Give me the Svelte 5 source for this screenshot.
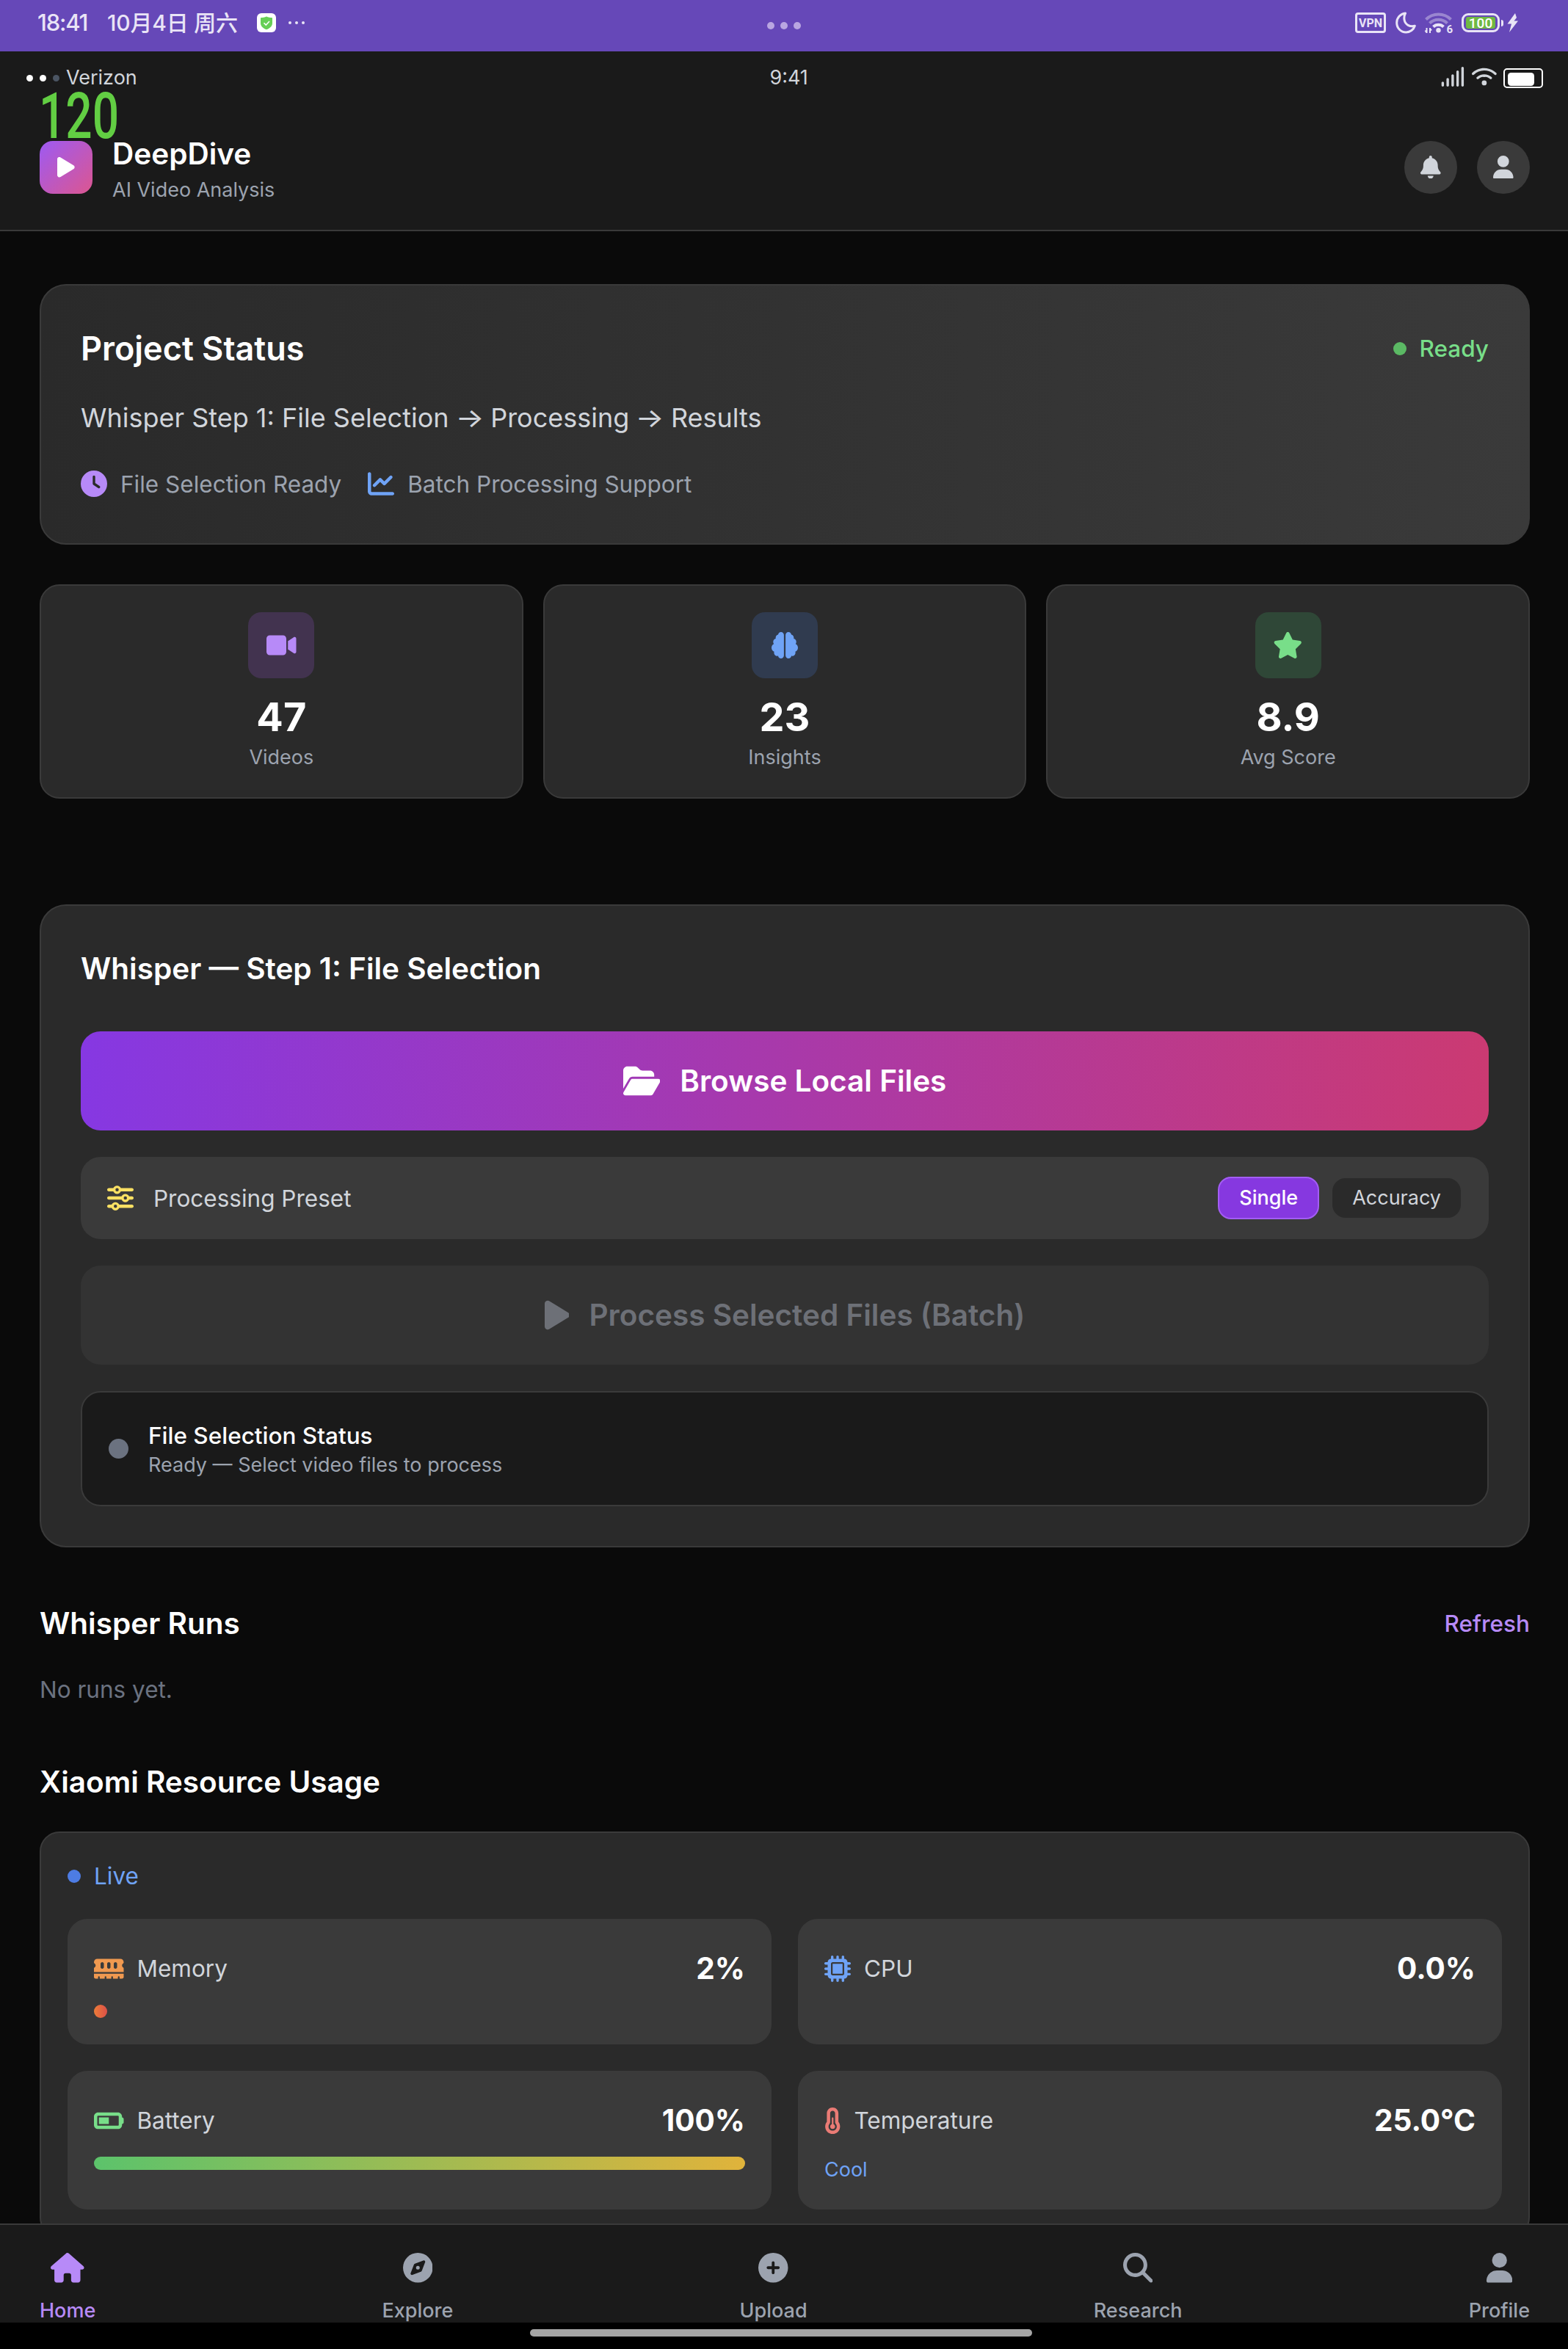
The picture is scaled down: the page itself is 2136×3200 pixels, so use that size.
<script>
  // Icon glyphs: [viewBox width, path]; every glyph is 512 units tall.
  const icons = {
    play: [384, 'M73 39c-14.8-9.1-33.4-9.4-48.5-.9S0 62.6 0 80V432c0 17.4 9.4 33.4 24.5 41.9s33.7 8.1 48.5-.9L361 297c14.3-8.7 23-24.2 23-41s-8.7-32.2-23-41L73 39z'],
    bell: [448, 'M224 0c-17.7 0-32 14.3-32 32V51.2C119 66 64 130.6 64 208v18.8c0 47-17.3 92.4-48.5 127.6l-7.4 8.3c-8.4 9.4-10.4 22.9-5.3 34.4S19.4 416 32 416H416c12.6 0 24-7.4 29.2-18.9s3.1-25-5.3-34.4l-7.4-8.3C401.3 319.2 384 273.9 384 226.8V208c0-77.4-55-142-128-156.8V32c0-17.7-14.3-32-32-32zm45.3 493.3c12-12 18.7-28.3 18.7-45.3H224 160c0 17 6.7 33.3 18.7 45.3s28.3 18.7 45.3 18.7s33.3-6.7 45.3-18.7z'],
    user: [448, 'M224 256A128 128 0 1 0 224 0a128 128 0 1 0 0 256zm-45.7 48C79.8 304 0 383.8 0 482.3C0 498.7 13.3 512 29.7 512H418.3c16.4 0 29.7-13.3 29.7-29.7C448 383.8 368.2 304 269.7 304H178.3z'],
    clock: [512, 'M256 0a256 256 0 1 1 0 512A256 256 0 1 1 256 0zM232 120V256c0 8 4 15.5 10.7 20l96 64c11 7.4 25.9 4.4 33.3-6.7s4.4-25.9-6.7-33.3L280 243.2V120c0-13.3-10.7-24-24-24s-24 10.7-24 24z'],
    chart: [512, 'M64 64c0-17.7-14.3-32-32-32S0 46.3 0 64V400c0 44.2 35.8 80 80 80H480c17.7 0 32-14.3 32-32s-14.3-32-32-32H80c-8.8 0-16-7.2-16-16V64zm406.6 86.6c12.5-12.5 12.5-32.8 0-45.3s-32.8-12.5-45.3 0L320 210.7l-57.4-57.4c-12.5-12.5-32.8-12.5-45.3 0l-112 112c-12.5 12.5-12.5 32.8 0 45.3s32.8 12.5 45.3 0L240 221.3l57.4 57.4c12.5 12.5 32.8 12.5 45.3 0l128-128z'],
    video: [576, 'M0 128C0 92.7 28.7 64 64 64H320c35.3 0 64 28.7 64 64V384c0 35.3-28.7 64-64 64H64c-35.3 0-64-28.7-64-64V128zM559.1 99.8c10.4 5.6 16.9 16.4 16.9 28.2V384c0 11.8-6.5 22.6-16.9 28.2s-23 5-32.9-1.6l-96-64L416 337.1V320 192 174.9l14.2-9.5 96-64c9.8-6.5 22.4-7.2 32.9-1.6z'],
    brain: [512, 'M184 0c30.9 0 56 25.1 56 56V456c0 30.9-25.1 56-56 56c-28.9 0-52.7-21.9-55.7-50.1c-5.2 1.4-10.7 2.1-16.3 2.1c-35.3 0-64-28.7-64-64c0-7.4 1.3-14.6 3.6-21.2C21.4 367.4 0 338.2 0 304c0-31.9 18.7-59.5 45.8-72.3C37.1 220.8 32 207 32 192c0-30.7 21.6-56.3 50.4-62.6C80.8 123.9 80 118 80 112c0-29.9 20.6-55.1 48.3-62.1C131.3 21.9 155.1 0 184 0zM328 0c28.9 0 52.6 21.9 55.7 49.9c27.8 7 48.3 32.1 48.3 62.1c0 6-.8 11.9-2.4 17.4c28.8 6.2 50.4 31.9 50.4 62.6c0 15-5.1 28.8-13.8 39.7C493.3 244.5 512 272.1 512 304c0 34.2-21.4 63.4-51.6 74.8c2.3 6.6 3.6 13.8 3.6 21.2c0 35.3-28.7 64-64 64c-5.6 0-11.1-.7-16.3-2.1c-3 28.2-26.8 50.1-55.7 50.1c-30.9 0-56-25.1-56-56V56c0-30.9 25.1-56 56-56z'],
    star: [576, 'M316.9 18C311.6 7 300.4 0 288.1 0s-23.4 7-28.8 18L195 150.3 51.4 171.5c-12 1.8-22 10.2-25.7 21.7s-.7 24.2 7.9 32.7L137.8 329 113.2 474.7c-2 12 3 24.2 12.9 31.3s23 8 33.8 2.3l128.3-68.5 128.3 68.5c10.8 5.7 23.9 4.9 33.8-2.3s14.9-19.3 12.9-31.3L438.5 329 542.7 225.9c8.6-8.5 11.7-21.2 7.9-32.7s-13.7-19.9-25.7-21.7L381.2 150.3 316.9 18z'],
    folder: [576, 'M88.7 223.8L0 375.8V96C0 60.7 28.7 32 64 32H181.5c17 0 33.3 6.7 45.3 18.7l26.5 26.5c12 12 28.3 18.7 45.3 18.7H416c35.3 0 64 28.7 64 64v32H144c-22.8 0-43.8 12.1-55.3 31.8zm27.6 16.1C122.1 230 132.6 224 144 224H544c11.5 0 22 6.1 27.7 16.1s5.7 22.2-.1 32.1l-112 192C453.9 474 443.4 480 432 480H32c-11.5 0-22-6.1-27.7-16.1s-5.7-22.2 .1-32.1l112-192z'],
    sliders: [512, 'M0 416c0 17.7 14.3 32 32 32l54.7 0c12.3 28.3 40.5 48 73.3 48s61-19.7 73.3-48L480 448c17.7 0 32-14.3 32-32s-14.3-32-32-32l-246.7 0c-12.3-28.3-40.5-48-73.3-48s-61 19.7-73.3 48L32 384c-17.7 0-32 14.3-32 32zm128 0a32 32 0 1 1 64 0 32 32 0 1 1 -64 0zM320 256a32 32 0 1 1 64 0 32 32 0 1 1 -64 0zm32-80c-32.8 0-61 19.7-73.3 48L32 224c-17.7 0-32 14.3-32 32s14.3 32 32 32l246.7 0c12.3 28.3 40.5 48 73.3 48s61-19.7 73.3-48l54.7 0c17.7 0 32-14.3 32-32s-14.3-32-32-32l-54.7 0c-12.3-28.3-40.5-48-73.3-48zM192 128a32 32 0 1 1 0-64 32 32 0 1 1 0 64zm73.3-64C253 35.7 224.8 16 192 16s-61 19.7-73.3 48L32 64C14.3 64 0 78.3 0 96s14.3 32 32 32l86.7 0c12.3 28.3 40.5 48 73.3 48s61-19.7 73.3-48L480 128c17.7 0 32-14.3 32-32s-14.3-32-32-32L265.3 64z'],
    memory: [576, 'M64 64C28.7 64 0 92.7 0 128v7.4c0 6.8 4.4 12.6 10.1 16.3C23.3 160.3 32 175.1 32 192s-8.7 31.7-21.9 40.3C4.4 236 0 241.8 0 248.6V320H576V248.6c0-6.8-4.4-12.6-10.1-16.3C552.7 223.7 544 208.9 544 192s8.7-31.7 21.9-40.3c5.7-3.7 10.1-9.5 10.1-16.3V128c0-35.3-28.7-64-64-64H64zM576 352H0v64c0 17.7 14.3 32 32 32H80V416c0-8.8 7.2-16 16-16s16 7.2 16 16v32h96V416c0-8.8 7.2-16 16-16s16 7.2 16 16v32h96V416c0-8.8 7.2-16 16-16s16 7.2 16 16v32h96V416c0-8.8 7.2-16 16-16s16 7.2 16 16v32h48c17.7 0 32-14.3 32-32V352zM192 160v64c0 17.7-14.3 32-32 32s-32-14.3-32-32V160c0-17.7 14.3-32 32-32s32 14.3 32 32zm128 0v64c0 17.7-14.3 32-32 32s-32-14.3-32-32V160c0-17.7 14.3-32 32-32s32 14.3 32 32zm128 0v64c0 17.7-14.3 32-32 32s-32-14.3-32-32V160c0-17.7 14.3-32 32-32s32 14.3 32 32z'],
    chip: [512, 'M176 24c0-13.3-10.7-24-24-24s-24 10.7-24 24V64c-35.3 0-64 28.7-64 64H24c-13.3 0-24 10.7-24 24s10.7 24 24 24H64v56H24c-13.3 0-24 10.7-24 24s10.7 24 24 24H64v56H24c-13.3 0-24 10.7-24 24s10.7 24 24 24H64c0 35.3 28.7 64 64 64v40c0 13.3 10.7 24 24 24s24-10.7 24-24V448h56v40c0 13.3 10.7 24 24 24s24-10.7 24-24V448h56v40c0 13.3 10.7 24 24 24s24-10.7 24-24V448c35.3 0 64-28.7 64-64h40c13.3 0 24-10.7 24-24s-10.7-24-24-24H448V280h40c13.3 0 24-10.7 24-24s-10.7-24-24-24H448V176h40c13.3 0 24-10.7 24-24s-10.7-24-24-24H448c0-35.3-28.7-64-64-64V24c0-13.3-10.7-24-24-24s-24 10.7-24 24V64H280V24c0-13.3-10.7-24-24-24s-24 10.7-24 24V64H176V24zM160 128H352c17.7 0 32 14.3 32 32V352c0 17.7-14.3 32-32 32H160c-17.7 0-32-14.3-32-32V160c0-17.7 14.3-32 32-32zm192 32H160V352H352V160z'],
    battery: [576, 'M464 160c8.8 0 16 7.2 16 16V336c0 8.8-7.2 16-16 16H80c-8.8 0-16-7.2-16-16V176c0-8.8 7.2-16 16-16H464zM80 96C35.8 96 0 131.8 0 176V336c0 44.2 35.8 80 80 80H464c44.2 0 80-35.8 80-80V320c17.7 0 32-14.3 32-32V224c0-17.7-14.3-32-32-32V176c0-44.2-35.8-80-80-80H80zm208 96H96V320H288V192z'],
    thermo: [320, 'M160 64c-26.5 0-48 21.5-48 48V276.5c0 17.3-7.1 31.9-15.3 42.5C86.2 332.6 80 349.5 80 368c0 44.2 35.8 80 80 80s80-35.8 80-80c0-18.5-6.2-35.4-16.7-48.9c-8.2-10.6-15.3-25.2-15.3-42.5V112c0-26.5-21.5-48-48-48zM48 112C48 50.2 98.1 0 160 0s112 50.1 112 112V276.5c0 .1 .1 .3 .2 .6c.2 .6 .8 1.6 1.7 2.8c18.9 24.4 30.1 55 30.1 88.1c0 79.5-64.5 144-144 144S16 447.5 16 368c0-33.2 11.2-63.8 30.1-88.1c.9-1.2 1.5-2.2 1.7-2.8c.1-.3 .2-.5 .2-.6V112zM208 368c0 26.5-21.5 48-48 48s-48-21.5-48-48c0-20.9 13.4-38.7 32-45.3V208c0-8.8 7.2-16 16-16s16 7.2 16 16V322.7c18.6 6.6 32 24.4 32 45.3z'],
    house: [576, 'M575.8 255.5c0 18-15 32.1-32 32.1h-32l.7 160.2c0 2.7-.2 5.4-.5 8.1V472c0 22.1-17.9 40-40 40H456c-1.1 0-2.2 0-3.3-.1c-1.4 .1-2.8 .1-4.2 .1H416 392c-22.1 0-40-17.9-40-40V448 384c0-17.7-14.3-32-32-32H256c-17.7 0-32 14.3-32 32v64 24c0 22.1-17.9 40-40 40H160 128.1c-1.5 0-3-.1-4.5-.2c-1.2 .1-2.4 .2-3.6 .2H104c-22.1 0-40-17.9-40-40V360c0-.9 0-1.9 .1-2.8V287.6H32c-18 0-32-14-32-32.1c0-9 3-17 10-24L266.4 8c7-7 15-8 22-8s15 2 21 7L564.8 231.5c8 7 12 15 11 24z'],
    compass: [512, 'M256 512A256 256 0 1 0 256 0a256 256 0 1 0 0 512zm50.7-186.9L162.4 380.6c-19.4 7.5-38.5-11.6-31-31l55.5-144.3c3.3-8.5 9.9-15.1 18.4-18.4l144.3-55.5c19.4-7.5 38.5 11.6 31 31L325.1 306.7c-3.2 8.5-9.9 15.1-18.4 18.4zM288 256a32 32 0 1 0 -64 0 32 32 0 1 0 64 0z'],
    plus: [512, 'M256 512A256 256 0 1 0 256 0a256 256 0 1 0 0 512zM232 344V280H168c-13.3 0-24-10.7-24-24s10.7-24 24-24h64V168c0-13.3 10.7-24 24-24s24 10.7 24 24v64h64c13.3 0 24 10.7 24 24s-10.7 24-24 24H280v64c0 13.3-10.7 24-24 24s-24-10.7-24-24z'],
    search: [512, 'M416 208c0 45.9-14.9 88.3-40 122.7L502.6 457.4c12.5 12.5 12.5 32.8 0 45.3s-32.8 12.5-45.3 0L330.7 376c-34.4 25.2-76.8 40-122.7 40C93.1 416 0 322.9 0 208S93.1 0 208 0S416 93.1 416 208zM208 352a144 144 0 1 0 0-288 144 144 0 1 0 0 288z'],
    wifi: [640, 'M54.2 202.9C123.2 136.7 216.8 96 320 96s196.8 40.7 265.8 106.9c12.8 12.2 33 11.8 45.2-.9s11.8-33-.9-45.2C549.7 79.5 440.4 32 320 32S90.3 79.5 9.8 156.7C-2.9 169-3.3 189.2 8.9 202s32.5 13.2 45.2 .9zM320 256c56.8 0 108.6 21.1 148.2 56c13.3 11.7 33.5 10.4 45.2-2.8s10.4-33.5-2.8-45.2C459.8 219.2 393 192 320 192s-139.8 27.2-190.5 72c-13.3 11.7-14.5 31.9-2.8 45.2s31.9 14.5 45.2 2.8c39.5-34.9 91.3-56 148.2-56zm64 160a64 64 0 1 0 -128 0 64 64 0 1 0 128 0z'],
    signal: [640, 'M576 0c17.7 0 32 14.3 32 32V480c0 17.7-14.3 32-32 32s-32-14.3-32-32V32c0-17.7 14.3-32 32-32zM448 96c17.7 0 32 14.3 32 32V480c0 17.7-14.3 32-32 32s-32-14.3-32-32V128c0-17.7 14.3-32 32-32zM352 224V480c0 17.7-14.3 32-32 32s-32-14.3-32-32V224c0-17.7 14.3-32 32-32s32 14.3 32 32zM192 288c17.7 0 32 14.3 32 32V480c0 17.7-14.3 32-32 32s-32-14.3-32-32V320c0-17.7 14.3-32 32-32zM96 416v64c0 17.7-14.3 32-32 32s-32-14.3-32-32V416c0-17.7 14.3-32 32-32s32 14.3 32 32z']
  };

  const stats = [
    { icon: 'video', tone: 'purple', value: '47', label: 'Videos' },
    { icon: 'brain', tone: 'blue', value: '23', label: 'Insights' },
    { icon: 'star', tone: 'green', value: '8.9', label: 'Avg Score' }
  ];

  const resources = [
    { icon: 'memory', tone: 'orange', label: 'Memory', value: '2%', bar: 2, fill: 'warm' },
    { icon: 'chip', tone: 'blue', label: 'CPU', value: '0.0%' },
    { icon: 'battery', tone: 'green', label: 'Battery', value: '100%', bar: 100, fill: 'charge' },
    { icon: 'thermo', tone: 'red', label: 'Temperature', value: '25.0°C', note: 'Cool' }
  ];

  const tabs = [
    { icon: 'house', label: 'Home' },
    { icon: 'compass', label: 'Explore' },
    { icon: 'plus', label: 'Upload' },
    { icon: 'search', label: 'Research' },
    { icon: 'user', label: 'Profile' }
  ];

  let active = $state('Home');
</script>

{#snippet icon(name)}
  <svg class="icon" viewBox="0 0 {icons[name][0]} 512" aria-hidden="true"><path fill-rule="evenodd" d={icons[name][1]} /></svg>
{/snippet}

<div class="screen">
  <div class="system">
    <div class="sys-left">
      <span class="sys-time">18:41</span>
      <span class="sys-date">10月4日 周六</span>
      <svg class="guard" viewBox="0 0 26 26" aria-hidden="true">
        <rect width="26" height="26" rx="6" fill="#fff" />
        <path d="M13 4.500c2.500 1.300 5 1.600 8 1.700v7.300c0 4.600-4 7.400-8 8.800-4-1.400-8-4.200-8-8.800V6.200c3-.1 5.500-.4 8-1.700z" fill="#67cf57" />
        <path d="M9.500 13.200l2.800 2.900 4.700-5.200" fill="none" stroke="#fff" stroke-width="1.500" />
      </svg>
      <span class="more"><i></i><i></i><i></i></span>
    </div>
    <div class="sys-mid"><i></i><i></i><i></i></div>
    <div class="sys-right">
      <span class="vpn">VPN</span>
      <svg class="moon" viewBox="0 0 28 30" aria-hidden="true"><path d="M13.500 2C6.500 2.800 1.700 8.400 1.700 15c0 7.300 5.700 13 12.700 13 5.500 0 10.300-3.600 11.900-8.700-6.700 1.900-13-1.800-14.200-8.100-.6-3.200 0-6.500 1.400-9.200z" fill="none" stroke="#e9e4f6" stroke-width="3" stroke-linejoin="round" /></svg>
      <div class="net">
        <svg viewBox="0 0 39 30" aria-hidden="true">
          <g fill="none" stroke="#e9e4f6" stroke-width="4">
            <path d="M2.500 10.500a24 24 0 0 1 34 0" opacity=".4" />
            <path d="M7.500 15.700a17 17 0 0 1 24 0" opacity=".4" />
            <path d="M12.500 20.500a10 10 0 0 1 14 0" />
          </g>
          <circle cx="19.500" cy="25.300" r="3.200" fill="#e9e4f6" />
          <path d="M3.500 22v7M3.500 28.500l-2-3M8 29v-7M8 22.500l2 3" fill="none" stroke="#e9e4f6" stroke-width="2" />
        </svg>
        <span class="gen">6</span>
      </div>
      <div class="charge-group">
        <span class="cell"><span class="level">100</span></span><i class="tip"></i>
      </div>
      <svg class="bolt" viewBox="0 0 15 26" aria-hidden="true"><path d="M11 0L0.500 14.500h5.500L3 26 15 10.500H9.500L13 6z" fill="#e9e4f6" /></svg>
    </div>
  </div>

  <div class="app">
    <header class="header">
      <div class="carrier">
        <div class="carrier-left"><i></i><i></i><i class="off"></i><span>Verizon</span></div>
        <span>9:41</span>
        <div class="carrier-right">
          <span class="glyph">{@render icon('signal')}</span>
          <span class="glyph">{@render icon('wifi')}</span>
          <span class="phone-battery"><i></i></span>
        </div>
      </div>
      <div class="brand-row">
        <div class="brand">
          <div class="logo">{@render icon('play')}</div>
          <div>
            <h1>DeepDive</h1>
            <p>AI Video Analysis</p>
          </div>
        </div>
        <div class="actions">
          <button aria-label="Notifications">{@render icon('bell')}</button>
          <button aria-label="Account">{@render icon('user')}</button>
        </div>
      </div>
      <span class="fps">120</span>
    </header>

    <main>
      <section class="status-card">
        <div class="between">
          <h2>Project Status</h2>
          <div class="ready"><i></i>Ready</div>
        </div>
        <p class="steps">Whisper Step 1: File Selection <span class="arrow">→</span> Processing <span class="arrow">→</span> Results</p>
        <div class="features">
          <div><span class="ic purple">{@render icon('clock')}</span>File Selection Ready</div>
          <div><span class="ic blue">{@render icon('chart')}</span>Batch Processing Support</div>
        </div>
      </section>

      <section class="stats">
        {#each stats as s}
          <div class="stat">
            <div class="badge {s.tone}">{@render icon(s.icon)}</div>
            <div class="stat-value">{s.value}</div>
            <div class="stat-label">{s.label}</div>
          </div>
        {/each}
      </section>

      <section class="whisper">
        <h3>Whisper — Step 1: File Selection</h3>
        <div class="stack">
          <button class="browse">{@render icon('folder')}<span>Browse Local Files</span></button>
          <div class="preset">
            <div class="preset-name"><span class="ic yellow">{@render icon('sliders')}</span>Processing Preset</div>
            <div class="chips">
              <button class="chip on">Single</button>
              <button class="chip">Accuracy</button>
            </div>
          </div>
          <button class="process" disabled>{@render icon('play')}<span>Process Selected Files (Batch)</span></button>
          <div class="file-status">
            <i></i>
            <div>
              <p class="fs-title">File Selection Status</p>
              <p class="fs-note">Ready — Select video files to process</p>
            </div>
          </div>
        </div>
      </section>

      <section class="runs">
        <div class="between">
          <h3>Whisper Runs</h3>
          <button class="link">Refresh</button>
        </div>
        <p>No runs yet.</p>
      </section>

      <section class="usage">
        <h3>Xiaomi Resource Usage</h3>
        <div class="usage-card">
          <div class="live"><i></i>Live</div>
          <div class="tiles">
            {#each resources as r}
              <div class="tile">
                <div class="between">
                  <div class="tile-name"><span class="ic {r.tone}">{@render icon(r.icon)}</span>{r.label}</div>
                  <strong>{r.value}</strong>
                </div>
                {#if r.bar}
                  <div class="track"><div class="fill {r.fill}" style="width: {r.bar}%"></div></div>
                {/if}
                {#if r.note}<div class="note">{r.note}</div>{/if}
              </div>
            {/each}
          </div>
        </div>
      </section>
    </main>

    <nav>
      {#each tabs as t}
        <button class="tab" class:active={active === t.label} onclick={() => (active = t.label)}>
          <span class="tab-icon">{@render icon(t.icon)}</span>
          <span>{t.label}</span>
        </button>
      {/each}
    </nav>
  </div>

  <div class="gesture"><i></i></div>
</div>

<style>
  :global(html) { font-size: 36px; }
  :global(body) { background: #000; overflow: hidden; }

  .screen {
    width: 2136px;
    height: 3200px;
    display: flex;
    flex-direction: column;
    overflow: hidden;
    font-family: Inter, 'Noto Sans CJK SC', sans-serif;
    color: #fff;
  }
  h1, h2, h3, p { margin: 0; }
  button { font: inherit; color: inherit; border: 0; padding: 0; background: none; }
  i { display: block; flex: none; }
  .icon { display: block; flex: none; height: 1em; width: auto; fill: currentColor; }
  .between { display: flex; align-items: center; justify-content: space-between; }
  .ic { font-size: 36px; }

  .purple { color: #b78af8; }
  .blue { color: #6fa3f6; }
  .green { color: #78de89; }
  .yellow { color: #fae063; }
  .orange { color: #f09950; }
  .red { color: #ea7b75; }

  /* System status bar */
  .system {
    flex: none;
    height: 70px;
    background: #6648b8;
    color: #e9e4f6;
    display: grid;
    grid-template-columns: 1fr auto 1fr;
    padding: 0 68px 0 51px;
  }
  .sys-left, .sys-right { display: flex; align-items: center; height: 62px; }
  .sys-left { font-size: 31px; font-weight: 500; line-height: 62px; white-space: nowrap; }
  .sys-time { width: 95px; letter-spacing: -1.2px; }
  .sys-date { width: 204px; font-size: 30px; letter-spacing: -0.2px; }
  .guard { width: 26px; height: 26px; }
  .more { display: flex; gap: 5px; margin-left: 17px; }
  .more i { width: 4px; height: 4px; border-radius: 50%; background: #e9e4f6; }
  .sys-mid { display: flex; gap: 8px; height: 70px; align-items: center; transform: translateX(8px); }
  .sys-mid i { width: 10px; height: 10px; border-radius: 50%; background: #b9a6e1; }
  .sys-right { justify-content: flex-end; }
  .vpn {
    box-sizing: border-box;
    width: 42px;
    height: 28px;
    border: 3px solid #e9e4f6;
    border-radius: 4px;
    font-family: Roboto, sans-serif;
    font-size: 16px;
    font-weight: 700;
    line-height: 23px;
    text-align: center;
  }
  .moon { width: 28px; height: 30px; margin-left: 13px; }
  .net { position: relative; width: 39px; height: 30px; margin-left: 11px; }
  .net svg { display: block; width: 39px; height: 30px; }
  .gen { position: absolute; right: 0; bottom: -2px; font-family: Roboto, sans-serif; font-size: 15px; font-weight: 700; line-height: 16px; }
  .charge-group { display: flex; align-items: center; margin-left: 12px; }
  .cell {
    box-sizing: border-box;
    width: 52px;
    height: 26px;
    padding: 2px 3px;
    border: 3px solid #e9e4f6;
    border-radius: 9px;
    display: flex;
  }
  .level {
    flex: 1;
    border-radius: 3px;
    background: #70b943;
    color: #fff;
    font-family: Roboto, sans-serif;
    font-size: 19px;
    font-weight: 500;
    line-height: 17px;
    text-align: center;
  }
  .tip { width: 3px; height: 9px; margin-left: 2px; border-radius: 0 3px 3px 0; background: #e9e4f6; }
  .bolt { width: 15px; height: 26px; margin-left: 5px; }

  /* App frame */
  .app {
    width: 2138px;
    flex: 1;
    min-height: 0;
    display: flex;
    flex-direction: column;
    overflow: hidden;
    background: #0a0a0a;
  }
  .header { position: relative; flex: none; background: #1a1a1a; border-bottom: 2px solid #3a3a3a; }
  .carrier {
    height: 2rem;
    padding: 0 1rem;
    display: flex;
    align-items: center;
    justify-content: space-between;
    font-size: 0.75rem;
    line-height: 1rem;
    color: #d1d5db;
  }
  .carrier-left, .carrier-right { display: flex; align-items: center; gap: 9px; }
  .carrier-left i { width: 9px; height: 9px; border-radius: 50%; background: #fff; }
  .carrier-left i.off { background: #4b5563; }
  .glyph { margin-bottom: 3px; }
  .phone-battery { box-sizing: border-box; width: 54px; height: 27px; border: 2px solid #fff; border-radius: 5px; padding: 4.5px; }
  .phone-battery i { width: 36px; height: 18px; border-radius: 4.5px; background: #fff; }

  .brand-row { display: flex; align-items: center; justify-content: space-between; padding: 1rem 1.5rem; }
  .brand { display: flex; align-items: center; gap: 0.75rem; }
  .logo {
    width: 2rem;
    height: 2rem;
    border-radius: 0.5rem;
    display: grid;
    place-items: center;
    font-size: 0.875rem;
    background: linear-gradient(135deg, #9d5af3, #dc5690);
  }
  h1 { font-size: 1.125rem; line-height: 1.75rem; font-weight: 600; }
  .brand p { font-size: 0.75rem; line-height: 1rem; color: #9ca3af; }
  .actions { display: flex; gap: 0.75rem; }
  .actions button {
    width: 2rem;
    height: 2rem;
    border-radius: 50%;
    display: grid;
    place-items: center;
    background: #3a3a3a;
    color: #d1d5db;
    font-size: 0.875rem;
  }
  /* Frame-rate counter floating over the header */
  .fps {
    position: absolute;
    left: 53px;
    top: 57px;
    font-family: Roboto, sans-serif;
    font-size: 87px;
    font-weight: 500;
    line-height: 62px;
    color: #62ce43;
    transform: scaleX(0.735);
    transform-origin: left;
  }

  /* Content */
  main { flex: 1; min-height: 0; overflow: hidden; padding: 2rem 1.5rem 0; }
  .status-card {
    padding: 1.5rem;
    border: 2px solid #3a3a3a;
    border-radius: 1rem;
    background: linear-gradient(90deg, #2a2a2a, #3a3a3a) border-box;
  }
  h2 { font-size: 1.25rem; line-height: 1.75rem; font-weight: 600; }
  h3 { font-size: 1.125rem; line-height: 1.75rem; font-weight: 600; }
  .ready { display: flex; align-items: center; gap: 0.5rem; font-size: 0.875rem; line-height: 1.25rem; font-weight: 500; color: #78de89; }
  .ready i { width: 18px; height: 18px; border-radius: 50%; background: #5bb964; }
  .steps { margin-top: 1rem; font-size: 1rem; line-height: 1.5rem; color: #d1d5db; }
  .arrow { display: inline-block; margin: 0 1px; line-height: 1; transform: scaleX(1.14); }
  .features { display: flex; gap: 1rem; height: 1.5rem; margin-top: 1rem; font-size: 0.875rem; color: #9ca3af; }
  .features div { display: flex; align-items: center; gap: 0.5rem; }

  .stats { display: grid; grid-template-columns: repeat(3, 1fr); gap: 0.75rem; margin-top: 1.5rem; }
  .stat {
    display: flex;
    flex-direction: column;
    align-items: center;
    padding: 1rem;
    border: 2px solid #3a3a3a;
    border-radius: 0.75rem;
    background: #2a2a2a;
  }
  .badge { width: 2.5rem; height: 2.5rem; border-radius: 0.5rem; display: grid; place-items: center; font-size: 1rem; }
  .badge.purple { background: #42334f; }
  .badge.blue { background: #303b4f; }
  .badge.green { background: #2f4737; }
  .stat-value { margin: 18px 0 3px; font-size: 1.5rem; line-height: 69px; font-weight: 700; }
  .stat-label { font-size: 0.75rem; line-height: 1rem; color: #9ca3af; }

  .whisper {
    margin-top: 4rem;
    padding: 1.5rem;
    border: 2px solid #3a3a3a;
    border-radius: 1rem;
    background: #2a2a2a;
  }
  .stack { display: flex; flex-direction: column; gap: 1rem; margin-top: 1.5rem; }
  .browse, .process {
    height: 3.75rem;
    display: flex;
    align-items: center;
    justify-content: center;
    gap: 0.75rem;
    border-radius: 0.75rem;
    font-size: 1.125rem;
    font-weight: 600;
  }
  .browse { background: linear-gradient(90deg, #8638e2, #cb3a72); }
  .process { background: #333; color: #6d7077; }
  .browse .icon, .process .icon { font-size: 1.25rem; }
  .preset {
    display: flex;
    align-items: center;
    justify-content: space-between;
    padding: 0.75rem 38px 0.75rem 1rem;
    border-radius: 0.75rem;
    background: #3a3a3a;
  }
  .preset-name { display: flex; align-items: center; gap: 0.75rem; font-size: 0.875rem; color: #d1d5db; }
  .chips { display: flex; align-items: center; gap: 0.5rem; font-size: 0.75rem; line-height: 1rem; }
  .chip { padding: 0.25rem 0.75rem; border-radius: 0.5rem; background: #2a2a2a; color: #d1d5db; }
  .chip.on { border: 2px solid #a35df4; background: #8638e0; color: #fff; font-weight: 500; }
  .file-status {
    display: flex;
    align-items: center;
    gap: 0.75rem;
    padding: 1rem;
    border: 2px solid #3a3a3a;
    border-radius: 0.75rem;
    background: #1a1a1a;
  }
  .file-status i { width: 27px; height: 27px; border-radius: 50%; background: #6b7280; }
  .fs-title { font-size: 0.875rem; line-height: 1.25rem; font-weight: 500; }
  .fs-note { font-size: 0.75rem; line-height: 1rem; color: #9ca3af; }

  .runs { margin-top: 2rem; }
  .link { font-size: 0.875rem; line-height: 1.25rem; font-weight: 500; color: #b78af8; }
  .runs p { margin-top: 1rem; font-size: 0.875rem; line-height: 1.25rem; color: #6b7280; }

  .usage { margin-top: 2rem; }
  .usage-card { margin-top: 1rem; padding: 1rem; border: 2px solid #3a3a3a; border-radius: 0.75rem; background: #2a2a2a; }
  .live { display: flex; align-items: center; gap: 0.5rem; font-size: 0.875rem; line-height: 1.25rem; color: #6fa3f6; }
  .live i { width: 18px; height: 18px; border-radius: 50%; background: #4d7ce4; }
  .tiles { display: grid; grid-template-columns: 1fr 1fr; gap: 1rem; margin-top: 1rem; }
  .tile { padding: 1rem; border-radius: 0.75rem; background: #3a3a3a; }
  .tile-name { display: flex; align-items: center; gap: 0.5rem; font-size: 0.875rem; color: #d1d5db; }
  .tile strong { font-size: 1.125rem; line-height: 1.75rem; font-weight: 700; }
  .track { height: 18px; margin-top: 18px; }
  .fill { height: 18px; border-radius: 9px; }
  .fill.warm { background: linear-gradient(90deg, #ec7c38, #dc5048); }
  .fill.charge { background: linear-gradient(90deg, #5cc36b, #e0b33b); }
  .note { margin-top: 18px; font-size: 0.75rem; line-height: 1rem; color: #6fa3f6; }

  /* Tab bar */
  nav {
    box-sizing: border-box;
    flex: none;
    height: 135px;
    overflow: hidden;
    display: flex;
    align-items: flex-start;
    justify-content: space-between;
    padding: 0.75rem 1.5rem 0;
    border-top: 2px solid #3a3a3a;
    background: #1a1a1a;
  }
  .tab {
    display: flex;
    flex-direction: column;
    align-items: center;
    gap: 9px;
    font-size: 0.75rem;
    line-height: 1rem;
    font-weight: 500;
    color: #9ca3af;
  }
  .tab.active { color: #b78af8; }
  .tab-icon { display: flex; align-items: center; height: 1.75rem; font-size: 1.125rem; }

  .gesture { flex: none; height: 36px; background: #000; display: flex; justify-content: center; padding-top: 9px; box-sizing: border-box; }
  .gesture i { width: 684px; height: 10px; border-radius: 5px; background: #a5a5a5; transform: translateX(-4px); }
</style>
